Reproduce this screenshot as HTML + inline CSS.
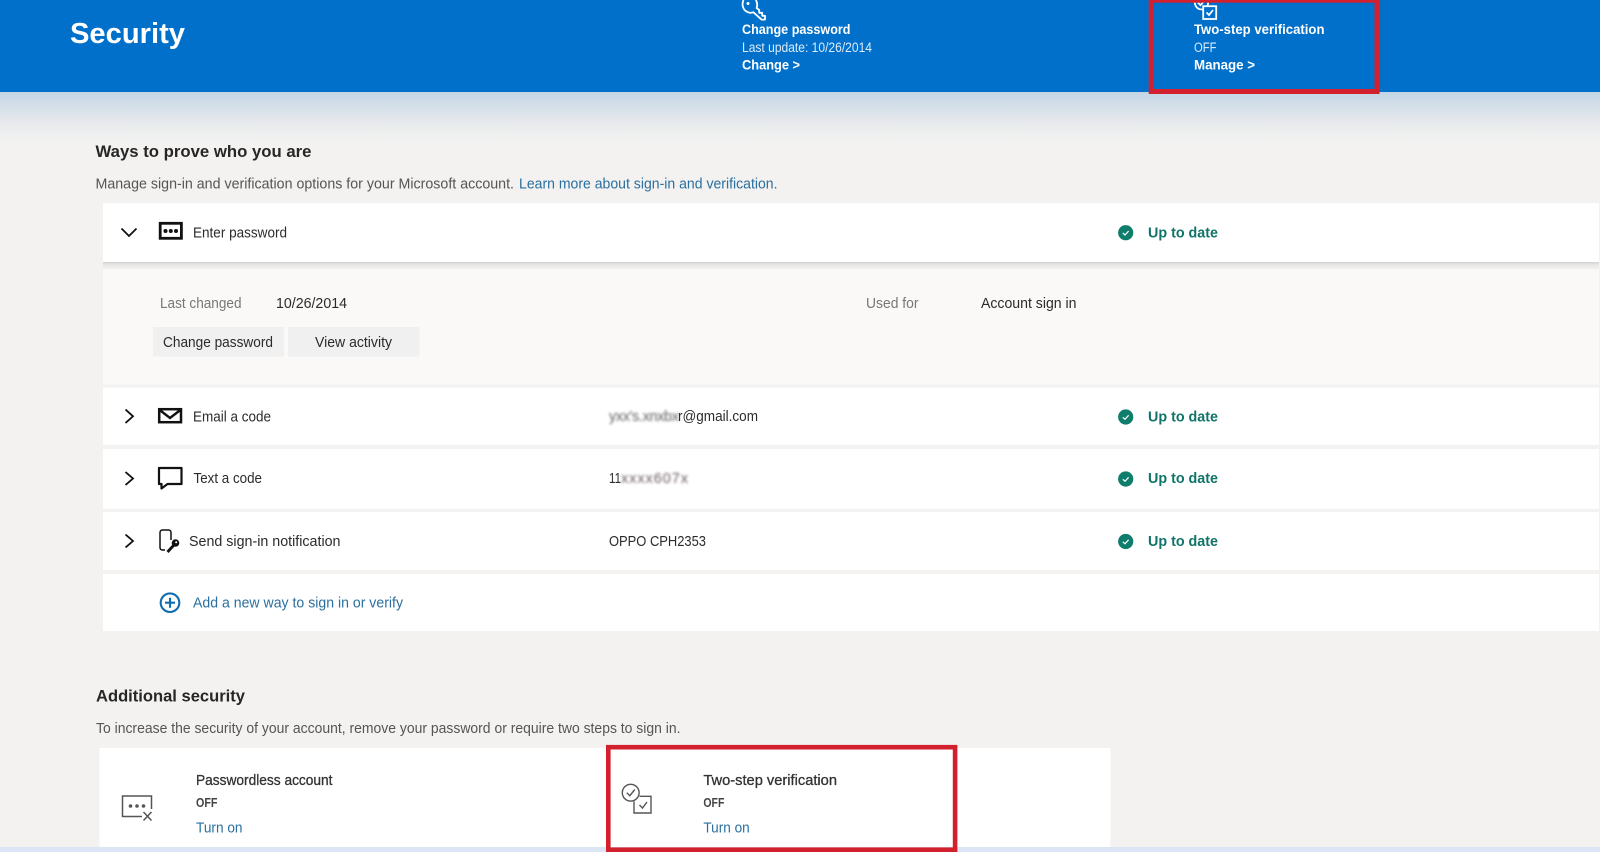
<!DOCTYPE html>
<html lang="en">
<head>
<meta charset="utf-8">
<title>Security</title>
<style>
html,body{margin:0;padding:0;width:1600px;height:852px;overflow:hidden;background:#f3f2f1}
svg{display:block;position:absolute;left:0;top:0}
text{font-family:"Liberation Sans",sans-serif;font-size:14.5px;fill:#2b2b2b}
.b{font-weight:700}
.w{fill:#fff}
.l{fill:#2a6f9f}
.g{fill:#107568;font-weight:700}
.m{fill:#555}
.s{fill:#333;stroke:#333;stroke-width:.3px}
</style>
</head>
<body>
<svg width="1600" height="852" viewBox="0 0 1600 852" xmlns="http://www.w3.org/2000/svg">
<defs>
<linearGradient id="hg" x1="0" y1="0" x2="0" y2="1">
<stop offset="0" stop-color="#c3d5e6"/><stop offset=".25" stop-color="#d3dee8"/><stop offset=".55" stop-color="#e6e9ec"/><stop offset=".8" stop-color="#f0f0f0"/><stop offset="1" stop-color="#f3f2f1"/>
</linearGradient>
<linearGradient id="sg" x1="0" y1="0" x2="0" y2="1">
<stop offset="0" stop-color="#d2d1d0"/><stop offset=".4" stop-color="#e8e7e6"/><stop offset="1" stop-color="#f1f0ef"/>
</linearGradient>
<filter id="bl" x="-10%" y="-50%" width="120%" height="200%"><feGaussianBlur stdDeviation="1.2"/></filter>
</defs>

<rect width="1600" height="852" fill="#f3f2f1"/>
<!-- header -->
<rect width="1600" height="92" fill="#0170cb"/>
<rect y="92" width="1600" height="54" fill="url(#hg)"/>
<text x="70" y="43" class="b w" style="font-size:29px" textLength="115" lengthAdjust="spacingAndGlyphs">Security</text>

<!-- key icon -->
<g fill="none" stroke="#fff" stroke-width="1.8" stroke-linejoin="round">
<path d="M743.5 0C741.3 5 743 11 749 12.6C750.5 13 752 12.8 753.3 12.2L761.5 19.6H765V15.8H762.2V12.8H759.2V10L756.6 8C757.6 5 757.2 2.2 755.8 0"/>
</g>
<circle cx="748" cy="3.5" r="1.5" fill="#fff"/>
<text x="742" y="34" class="b w" style="font-size:13.5px" textLength="108.5" lengthAdjust="spacingAndGlyphs">Change password</text>
<text x="742" y="52" class="w" style="font-size:13.5px;fill:#dcebf7" textLength="130" lengthAdjust="spacingAndGlyphs">Last update: 10/26/2014</text>
<text x="742" y="69.5" class="b w" style="font-size:13.5px" textLength="58" lengthAdjust="spacingAndGlyphs">Change &gt;</text>

<!-- two-step icon header -->
<g fill="none" stroke="#fff" stroke-width="1.8">
<circle cx="1201.5" cy="2.8" r="6.6"/>
<path d="M1197.8 2.5L1200.5 5.2L1205 0"/>
<rect x="1203.2" y="6.2" width="13" height="12.8" fill="#0170cb"/>
<path d="M1206.5 12.5L1209 15L1213 10"/>
</g>
<text x="1194" y="34" class="b w" style="font-size:13.5px" textLength="130.5" lengthAdjust="spacingAndGlyphs">Two-step verification</text>
<text x="1194" y="52" class="w" style="font-size:13.5px;fill:#dcebf7" textLength="22.5" lengthAdjust="spacingAndGlyphs">OFF</text>
<text x="1194" y="69.5" class="b w" style="font-size:13.5px" textLength="61" lengthAdjust="spacingAndGlyphs">Manage &gt;</text>
<rect x="1151.2" y="0.2" width="225.8" height="91.3" fill="none" stroke="#d2202f" stroke-width="5"/>

<!-- ways to prove -->
<text x="95.5" y="157" class="b" style="font-size:17px;fill:#262626" textLength="216" lengthAdjust="spacingAndGlyphs">Ways to prove who you are</text>
<text x="95.5" y="188.5" class="m" textLength="418.5" lengthAdjust="spacingAndGlyphs">Manage sign-in and verification options for your Microsoft account.</text>
<text x="519" y="188.5" class="l" textLength="258.5" lengthAdjust="spacingAndGlyphs">Learn more about sign-in and verification.</text>

<!-- row 1 -->
<rect x="103" y="203" width="1496" height="59" fill="#fff"/>
<rect x="103" y="262" width="1496" height="7" fill="url(#sg)"/>
<path d="M121.5 228.5L129 236L136.5 228.5" fill="none" stroke="#111" stroke-width="1.8"/>
<rect x="160.2" y="223.3" width="21.2" height="15" fill="#fff" stroke="#111" stroke-width="2.8"/>
<circle cx="165.5" cy="231" r="2" fill="#111"/><circle cx="170.8" cy="231" r="2" fill="#111"/><circle cx="176" cy="231" r="2" fill="#111"/>
<text x="193" y="237.5" textLength="94" lengthAdjust="spacingAndGlyphs">Enter password</text>
<circle cx="1125.7" cy="232.7" r="7.6" fill="#0f7d6c"/>
<path d="M1122.8 233L1125 235L1128.6 231" fill="none" stroke="#fff" stroke-width="1.2"/>
<text x="1148" y="237.5" class="g" textLength="70" lengthAdjust="spacingAndGlyphs">Up to date</text>

<!-- panel -->
<rect x="103" y="269" width="1496" height="115.5" fill="#faf9f8"/>
<text x="160" y="308" style="fill:#777" textLength="81.5" lengthAdjust="spacingAndGlyphs">Last changed</text>
<text x="276" y="308" textLength="71" lengthAdjust="spacingAndGlyphs">10/26/2014</text>
<text x="866" y="308" style="fill:#777" textLength="52.5" lengthAdjust="spacingAndGlyphs">Used for</text>
<text x="981" y="308" textLength="95.5" lengthAdjust="spacingAndGlyphs">Account sign in</text>
<rect x="153" y="327" width="131" height="29.5" fill="#f0f0f0"/>
<rect x="288" y="327" width="131.5" height="29.5" fill="#f0f0f0"/>
<text x="163" y="347" textLength="110" lengthAdjust="spacingAndGlyphs">Change password</text>
<text x="315" y="347" textLength="77" lengthAdjust="spacingAndGlyphs">View activity</text>

<!-- email -->
<rect x="103" y="387.5" width="1496" height="57.5" fill="#fff"/>
<path d="M125.5 409.5L133 416.3L125.5 423" fill="none" stroke="#111" stroke-width="1.8"/>
<rect x="159.2" y="409.2" width="21.8" height="13" fill="#fff" stroke="#111" stroke-width="2.5"/>
<path d="M159 409.5L170 418L181 409.5" fill="none" stroke="#111" stroke-width="2.4"/>
<text x="193" y="421.7" textLength="78" lengthAdjust="spacingAndGlyphs">Email a code</text>
<text x="609" y="421" filter="url(#bl)" style="fill:#5f5f5f" textLength="70" lengthAdjust="spacing">yxx's.xnxbx</text>
<text x="678" y="421" textLength="80" lengthAdjust="spacingAndGlyphs">r@gmail.com</text>
<circle cx="1125.7" cy="417" r="7.6" fill="#0f7d6c"/>
<path d="M1122.8 417.3L1125 419.3L1128.6 415.3" fill="none" stroke="#fff" stroke-width="1.2"/>
<text x="1148" y="421.7" class="g" textLength="70" lengthAdjust="spacingAndGlyphs">Up to date</text>

<!-- text -->
<rect x="103" y="449" width="1496" height="60" fill="#fff"/>
<path d="M125.5 472L133 478.5L125.5 485" fill="none" stroke="#111" stroke-width="1.8"/>
<path d="M159 468H181.5V484H167.5L161.5 488.5V484H159Z" fill="#fff" stroke="#111" stroke-width="2.2" stroke-linejoin="round"/>
<text x="193.5" y="483" textLength="68.5" lengthAdjust="spacingAndGlyphs">Text a code</text>
<text x="609" y="483" textLength="12" lengthAdjust="spacingAndGlyphs">11</text>
<text x="621" y="483" filter="url(#bl)" style="fill:#6b5c62" textLength="67" lengthAdjust="spacing">xxxx607x</text>
<circle cx="1125.7" cy="479" r="7.6" fill="#0f7d6c"/>
<path d="M1122.8 479.3L1125 481.3L1128.6 477.3" fill="none" stroke="#fff" stroke-width="1.2"/>
<text x="1148" y="483" class="g" textLength="70" lengthAdjust="spacingAndGlyphs">Up to date</text>

<!-- notification -->
<rect x="103" y="512" width="1496" height="58" fill="#fff"/>
<path d="M125.5 534.5L133 541L125.5 547.5" fill="none" stroke="#111" stroke-width="1.8"/>
<path d="M171 540V532.5C171 531 170 530 168.5 530H162.5C161 530 160 531 160 532.5V547.5C160 549 161 550 162.5 550H165" fill="none" stroke="#111" stroke-width="1.5"/>
<circle cx="175.5" cy="543" r="3.8" fill="#111"/>
<path d="M173.5 545.5L167.5 552" stroke="#111" stroke-width="2.8" fill="none"/>
<circle cx="176.2" cy="542.3" r="1" fill="#fff"/>
<text x="189" y="546" textLength="151.5" lengthAdjust="spacingAndGlyphs">Send sign-in notification</text>
<text x="609" y="546" textLength="97" lengthAdjust="spacingAndGlyphs">OPPO CPH2353</text>
<circle cx="1125.7" cy="541.5" r="7.6" fill="#0f7d6c"/>
<path d="M1122.8 541.8L1125 543.8L1128.6 539.8" fill="none" stroke="#fff" stroke-width="1.2"/>
<text x="1148" y="546" class="g" textLength="70" lengthAdjust="spacingAndGlyphs">Up to date</text>

<!-- add -->
<rect x="103" y="574" width="1496" height="57" fill="#fff"/>
<circle cx="170" cy="602.7" r="9.3" fill="none" stroke="#0f6cb0" stroke-width="2.1"/>
<path d="M170 597.7V607.7M165 602.7H175" stroke="#0f6cb0" stroke-width="2.1"/>
<text x="193" y="607.7" class="l" textLength="210" lengthAdjust="spacingAndGlyphs">Add a new way to sign in or verify</text>

<!-- additional -->
<text x="96" y="701.7" class="b" style="font-size:17px;fill:#262626" textLength="149" lengthAdjust="spacingAndGlyphs">Additional security</text>
<text x="96" y="733" class="m" textLength="584.5" lengthAdjust="spacingAndGlyphs">To increase the security of your account, remove your password or require two steps to sign in.</text>

<rect x="0" y="847" width="1600" height="5" fill="#dbe5f3"/>
<rect x="99.5" y="748" width="1011" height="99" fill="#fff"/>

<path d="M151.5 809V796H122.5V816.5H142" fill="none" stroke="#555" stroke-width="1.5"/>
<circle cx="130.5" cy="806" r="1.8" fill="#555"/><circle cx="137" cy="806" r="1.8" fill="#555"/><circle cx="143.5" cy="806" r="1.8" fill="#555"/>
<path d="M143.5 812L151.5 820.5M151.5 812L143.5 820.5" stroke="#555" stroke-width="1.5"/>
<text x="196" y="785" class="s" textLength="136.5" lengthAdjust="spacingAndGlyphs">Passwordless account</text>
<text x="196" y="807" class="b" style="font-size:12.5px;fill:#444" textLength="21.5" lengthAdjust="spacingAndGlyphs">OFF</text>
<text x="196" y="832.7" class="l" textLength="46.5" lengthAdjust="spacingAndGlyphs">Turn on</text>

<g fill="none" stroke="#555" stroke-width="1.4">
<circle cx="630.7" cy="792.7" r="8.4"/>
<path d="M634 801.5V813H651V796.3H639.5"/>
<path d="M626.8 792.8L629.8 795.7L634.8 789.5"/>
<path d="M639.5 805L642.5 808L647 802"/>
</g>
<text x="703.4" y="785" class="s" textLength="133.6" lengthAdjust="spacingAndGlyphs">Two-step verification</text>
<text x="703.4" y="807" class="b" style="font-size:12.5px;fill:#444" textLength="21" lengthAdjust="spacingAndGlyphs">OFF</text>
<text x="703.4" y="832.7" class="l" textLength="46.3" lengthAdjust="spacingAndGlyphs">Turn on</text>
<rect x="608.3" y="747.2" width="346.8" height="102.5" fill="none" stroke="#d2202f" stroke-width="4.6"/>
</svg>
</body>
</html>
